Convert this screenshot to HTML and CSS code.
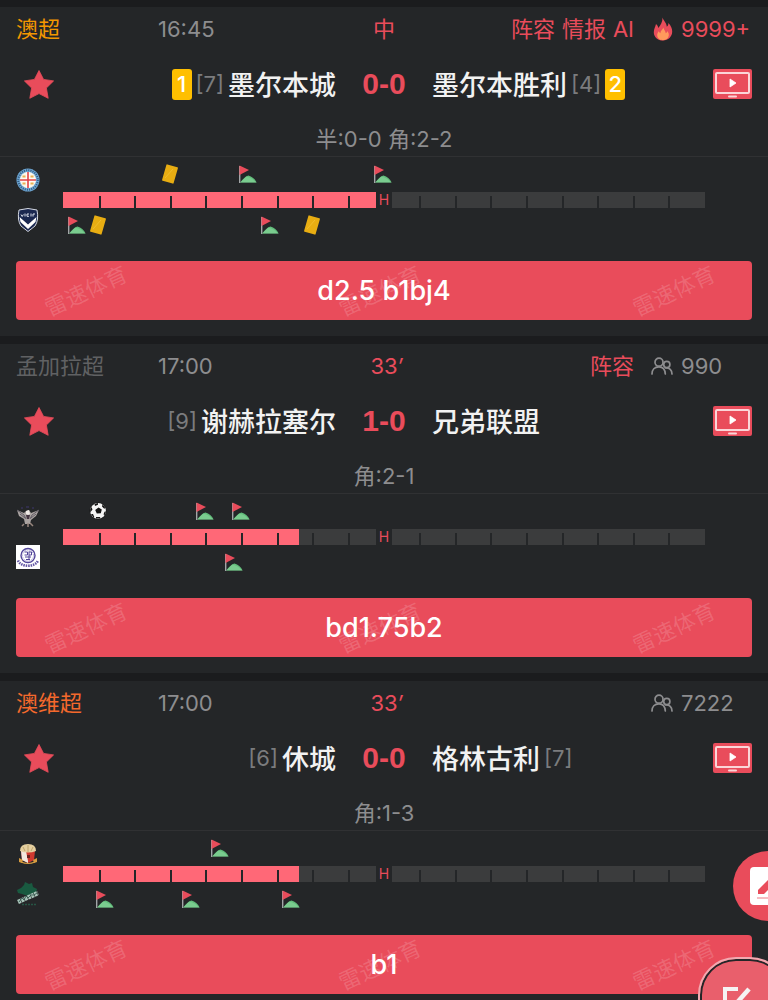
FILE: index.html
```html
<!DOCTYPE html>
<html lang="zh-CN">
<head>
    <meta charset="UTF-8">
    <meta name="viewport" content="width=device-width, initial-scale=1.0">
    <title>雷速体育</title>
    <link rel="stylesheet" href="styles.css">
</head>
<body>

    <!-- 公用图标 -->
    <svg class="sprite" aria-hidden="true">
        <symbol id="star" viewBox="0 0 30 29">
            <path d="M15 0.5 L19.6 9.4 L29.6 10.9 L22.4 18 L24.2 28.3 L15 23.6 L5.8 28.3 L7.6 18 L0.4 10.9 L10.4 9.4 Z" fill="#e94c5b" stroke="#e94c5b" stroke-width="0.8" stroke-linejoin="round"/>
        </symbol>
        <symbol id="tv" viewBox="0 0 39 30">
            <rect width="39" height="30" rx="2" fill="#e94c5b"/>
            <rect x="3" y="4" width="33" height="20" rx="1" fill="none" stroke="#fbd5d8" stroke-width="2"/>
            <path d="M17 10 L23 14 L17 18 Z" fill="#fff" stroke="#fff" stroke-width="0.8" stroke-linejoin="round"/>
            <rect x="15" y="26.500" width="9" height="2" rx="1" fill="#fbd5d8"/>
        </symbol>
        <symbol id="fire" viewBox="0 0 20 24">
            <path d="M9.5 0.5 C10.4 3.6 13.8 6 13.8 9.8 C15 9 15.4 7.6 15.4 6 C18 8.600 19.200 11.600 19.2 14.6 C19.2 19.800 15.200 23.500 10 23.5 C4.800 23.500 0.800 20 0.8 15.2 C0.800 12.200 2.400 9.800 3 7 C4.500 8.200 5 9.400 5.2 11 C7.400 8.400 9.700 5 9.500 0.500 Z" fill="#e94c5b"/>
            <path d="M10.4 10.5 C10.600 12.500 12.600 14 12.8 16.2 C13.800 15.900 14.200 15 14.300 14 C15.600 15.500 16 17 15.8 18.600 C15.400 21.500 13 23.200 10 23.200 C7 23.200 4.400 21.500 4.2 18.500 C4.100 16.800 4.800 15.500 5.600 14.200 C6.100 15 6.500 15.700 7.300 16.200 C7.500 13.800 9.600 12.600 10.400 10.500 Z" fill="#ff9a5c"/>
        </symbol>
        <symbol id="people" viewBox="0 0 22 18">
            <g fill="none" stroke="#8d8d8f" stroke-width="1.700" stroke-linecap="round">
                <circle cx="8" cy="5.200" r="4"/>
                <path d="M1 17 C1 12.800 3.500 9.800 8 9.800 C11.500 9.800 14 11.800 14.300 17"/>
                <circle cx="15.800" cy="7.500" r="3.100"/>
                <path d="M14.500 11 C18.500 10.600 21 13 21 17"/>
            </g>
        </symbol>
        <symbol id="flag" viewBox="0 0 18 18">
            <rect x="0" y="1" width="1.400" height="17" fill="#a3a6a8"/>
            <path d="M0.500 0.500 L10 5 L0.500 10 Z" fill="#e94c5b"/>
            <path d="M1.200 17.500 C4 14 6.500 11 9.500 10.500 C13 11.500 16 14 17.600 17.500 Z" fill="#62bd7b"/>
            <path d="M7 11.800 C11 12 14 14 15.500 16 L17.600 17.500 L1.200 17.500 Z" fill="#8bd69d" opacity="0.600"/>
        </symbol>
        <symbol id="yellow" viewBox="0 0 18 20">
            <rect x="3" y="1.500" width="12" height="17" rx="0.800" transform="rotate(16 9 10)" fill="#e8ad12"/>
            <path d="M4 14 L12 5" stroke="#f1bd2d" stroke-width="1"/>
        </symbol>
        <symbol id="ball" viewBox="0 0 18 18">
            <circle cx="9" cy="9" r="8.400" fill="#151515"/>
            <circle cx="9" cy="9" r="7.900" fill="#f5f5f5"/>
            <path d="M9.500 5.400 L12.800 7.500 L11.800 11.200 L7.800 11.400 L6.200 8 Z M5.500 2 L9 1 L9 2.800 L6 4 Z M13.500 2.500 L16 5 L15.500 7 L13 4.500 Z M16.900 9.500 L16 13 L14.500 12.500 L15.500 9.800 Z M7 15 L11 15 L11.500 16.500 L7 16.500 Z M2 12 L4 12 L5.300 15 L4.500 15.500 Z M1.200 7 L2.500 5 L3.500 7.500 L1.200 10.500 Z" fill="#151515"/>
        </symbol>
    </svg>

    <main class="match-list">

        <article class="match">
            <header class="match-top">
                <div class="meta">
                    <span class="league orange">澳超</span>
                    <time>16:45</time>
                </div>
                <span class="status">中</span>
                <div class="extra">
                    <nav class="tags"><a href="#">阵容</a><a href="#">情报</a><a href="#">AI</a></nav>
                    <span class="viewers hot"><svg class="viewer-icon"><use href="#fire"/></svg>9999+</span>
                </div>
            </header>
            <div class="teams">
                <div class="home">
                    <button class="icon-btn" aria-label="收藏"><svg class="star"><use href="#star"/></svg></button>
                    <span class="side"><b class="card-count">1</b><span class="rank">[7]</span><span class="name">墨尔本城</span></span>
                </div>
                <strong class="score">0-0</strong>
                <div class="away">
                    <span class="side"><span class="name">墨尔本胜利</span><span class="rank">[4]</span><b class="card-count">2</b></span>
                    <button class="icon-btn" aria-label="直播"><svg class="tv"><use href="#tv"/></svg></button>
                </div>
            </div>
            <p class="detail">半:0-0 角:2-2</p>
            <section class="timeline">
                <div class="logos">
                    <svg class="logo" viewBox="0 0 24 24">
                        <circle cx="12" cy="12" r="11.500" fill="#6ea6d2"/>
                        <circle cx="12" cy="12" r="9.800" fill="none" stroke="#31577f" stroke-width="2" stroke-dasharray="1 1.200"/>
                        <circle cx="12" cy="12" r="8" fill="#fbf6ea"/>
                        <path d="M6.500 7.500h3v2h-3z M14.500 7.500h3v2h-3z M6.500 14.500h3v2h-3z M14.500 14.500h3v2h-3z" fill="#e9b154"/>
                        <path d="M12 4 V20 M4 12 H20" stroke="#fff" stroke-width="3.200"/>
                        <path d="M12 4 V20 M4 12 H20" stroke="#df4245" stroke-width="1.600"/>
                    </svg>
                    <svg class="logo" viewBox="0 0 24 24">
                        <path d="M3 2 Q12 -1 21 2 Q23 12 19 18 L12 23.500 L5 18 Q1 12 3 2 Z" fill="#1b2850" stroke="#d5d9e2" stroke-width="1"/>
                        <path d="M3.500 9 L12 16.500 L20.500 9 L19.500 14 L12 21 L4.500 14 Z" fill="#fff"/>
                        <path d="M5 6.500 l1.200 2 l1.200 -2 M9 5.500 v3 M13 6 h-2 v2.300 h2 M15 5.500 v3 M17 8.500 v-2.500 h2" fill="none" stroke="#dfe3ee" stroke-width="1"/>
                    </svg>
                </div>
                <div class="track">
                    <div class="bar">
                        <div class="half"><div class="fill" style="width: 100%"></div></div>
                        <span class="half-mark">H</span>
                        <div class="half"></div>
                        <div class="ticks"><i></i><i></i><i></i><i></i><i></i><i></i><i></i><i></i><i></i><i></i><i></i><i></i><i></i><i></i><i></i><i></i><i></i><i></i></div>
                    </div>
                    <svg class="event up" style="left: 16.600%"><use href="#yellow"/></svg>
                    <svg class="event up" style="left: 28.800%"><use href="#flag"/></svg>
                    <svg class="event up" style="left: 49.900%"><use href="#flag"/></svg>
                    <svg class="event down" style="left: 2.200%"><use href="#flag"/></svg>
                    <svg class="event down" style="left: 5.500%"><use href="#yellow"/></svg>
                    <svg class="event down" style="left: 32.200%"><use href="#flag"/></svg>
                    <svg class="event down" style="left: 38.800%"><use href="#yellow"/></svg>
                </div>
            </section>
            <button class="note">
                <span class="watermark" aria-hidden="true"><span>雷速体育</span><span>雷速体育</span><span>雷速体育</span></span>
                <span class="note-text">d2.5 b1bj4</span>
            </button>
        </article>

        <article class="match">
            <header class="match-top">
                <div class="meta">
                    <span class="league gray">孟加拉超</span>
                    <time>17:00</time>
                </div>
                <span class="status">33<i class="minute">′</i></span>
                <div class="extra">
                    <nav class="tags"><a href="#">阵容</a></nav>
                    <span class="viewers"><svg class="viewer-icon"><use href="#people"/></svg>990</span>
                </div>
            </header>
            <div class="teams">
                <div class="home">
                    <button class="icon-btn" aria-label="收藏"><svg class="star"><use href="#star"/></svg></button>
                    <span class="side"><span class="rank">[9]</span><span class="name">谢赫拉塞尔</span></span>
                </div>
                <strong class="score">1-0</strong>
                <div class="away">
                    <span class="side"><span class="name">兄弟联盟</span></span>
                    <button class="icon-btn" aria-label="直播"><svg class="tv"><use href="#tv"/></svg></button>
                </div>
            </div>
            <p class="detail">角:2-1</p>
            <section class="timeline">
                <div class="logos">
                    <svg class="logo" viewBox="0 0 24 24">
                        <path d="M1 5 L8 8 L10 6 L13 5 L15 8 L23 5 L20 11 L15 15 L14 19 L9 19 L8 14 L3 11 Z" fill="#aaa3a1"/>
                        <path d="M1 5 L8 10 L10 14 M23 5 L16 10 L14 14 M4 9 L9 13 M20 9 L15 13" stroke="#625d66" stroke-width="1" fill="none"/>
                        <path d="M10 6 L13 5 L14 9 L12 10 L10 9 Z" fill="#eee9e5"/>
                        <path d="M10 10 h4 l-1 4 h-2z" fill="#443541"/>
                        <path d="M8 19 l-2 2 M12 18 v4 M14 18 l3 3" stroke="#97857d" stroke-width="1.500"/>
                        <path d="M5 3 h2 M10 2 h3 M16 3 h2" stroke="#3e366e" stroke-width="1"/>
                    </svg>
                    <svg class="logo" viewBox="0 0 24 24">
                        <rect width="24" height="24" fill="#fff"/>
                        <circle cx="12" cy="10.500" r="7" fill="#fff" stroke="#54479a" stroke-width="1.400"/>
                        <circle cx="12" cy="10.500" r="5.500" fill="none" stroke="#9a91c9" stroke-width="1" stroke-dasharray="1 1"/>
                        <path d="M8.500 7 h3 v3 h-3 M13 6.500 v8 M13 7 h2.500 v3 h-2.500 M9 12 h6 M10 14.500 h4" fill="none" stroke="#54479a" stroke-width="1"/>
                        <path d="M2 15.500 C5 22.500 19 22.500 22 15.500" fill="none" stroke="#6255a4" stroke-width="2.600" stroke-dasharray="1.500 0.900"/>
                    </svg>
                </div>
                <div class="track">
                    <div class="bar">
                        <div class="half"><div class="fill" style="width: 75.400%"></div></div>
                        <span class="half-mark">H</span>
                        <div class="half"></div>
                        <div class="ticks"><i></i><i></i><i></i><i></i><i></i><i></i><i></i><i></i><i></i><i></i><i></i><i></i><i></i><i></i><i></i><i></i><i></i><i></i></div>
                    </div>
                    <svg class="event up" style="left: 5.500%"><use href="#ball"/></svg>
                    <svg class="event up" style="left: 22.100%"><use href="#flag"/></svg>
                    <svg class="event up" style="left: 27.700%"><use href="#flag"/></svg>
                    <svg class="event down" style="left: 26.600%"><use href="#flag"/></svg>
                </div>
            </section>
            <button class="note">
                <span class="watermark" aria-hidden="true"><span>雷速体育</span><span>雷速体育</span><span>雷速体育</span></span>
                <span class="note-text">bd1.75b2</span>
            </button>
        </article>

        <article class="match">
            <header class="match-top">
                <div class="meta">
                    <span class="league deep">澳维超</span>
                    <time>17:00</time>
                </div>
                <span class="status">33<i class="minute">′</i></span>
                <div class="extra">
                    <span class="viewers"><svg class="viewer-icon"><use href="#people"/></svg>7222</span>
                </div>
            </header>
            <div class="teams">
                <div class="home">
                    <button class="icon-btn" aria-label="收藏"><svg class="star"><use href="#star"/></svg></button>
                    <span class="side"><span class="rank">[6]</span><span class="name">休城</span></span>
                </div>
                <strong class="score">0-0</strong>
                <div class="away">
                    <span class="side"><span class="name">格林古利</span><span class="rank">[7]</span></span>
                    <button class="icon-btn" aria-label="直播"><svg class="tv"><use href="#tv"/></svg></button>
                </div>
            </div>
            <p class="detail">角:1-3</p>
            <section class="timeline">
                <div class="logos">
                    <svg class="logo" viewBox="0 0 24 24">
                        <path d="M5 9 L19 9 L18 18 L12 21 L6 18 Z" fill="#d0392f"/>
                        <path d="M5 9 L10 9 L12 19 L12 21 L6 18 Z" fill="#f3e9df"/>
                        <path d="M4 9 Q4 2 12 2 Q20 2 20 9 Q12 12 4 9 Z" fill="#e5cf9f"/>
                        <path d="M7 5 L9 9 M12 3 V10 M17 5 L15 9" stroke="#b49a62" stroke-width="0.800"/>
                        <path d="M3 16 l4 2 l-1 3 l-3 -1z M21 16 l-4 2 l1 3 l3 -1z" fill="#d79c40"/>
                        <path d="M5 20 q7 3 14 0" fill="none" stroke="#d79c40" stroke-width="1.200"/>
                        <path d="M11 13 h3 v3 h-3z" fill="#6b2320"/>
                    </svg>
                    <svg class="logo" viewBox="0 0 24 24">
                        <path d="M5 6 L8 3 L9 0 L13 2 L16 1 L17 5 L21 7 L20 11 L15 12 L12 14 L6 12 L2 11 L1 8 Z" fill="#195a40"/>
                        <path d="M2 20 L22 11" stroke="#a8c4b9" stroke-width="4.500" stroke-dasharray="3 0.600"/>
                        <path d="M3 20 L6 16 L8 18 L10 14 L12 16 L15 13 L18 13 L21 11" fill="none" stroke="#365b50" stroke-width="0.900"/>
                        <path d="M6 22.500 H21" stroke="#265544" stroke-width="1.500" stroke-dasharray="2 1"/>
                    </svg>
                </div>
                <div class="track">
                    <div class="bar">
                        <div class="half"><div class="fill" style="width: 75.400%"></div></div>
                        <span class="half-mark">H</span>
                        <div class="half"></div>
                        <div class="ticks"><i></i><i></i><i></i><i></i><i></i><i></i><i></i><i></i><i></i><i></i><i></i><i></i><i></i><i></i><i></i><i></i><i></i><i></i></div>
                    </div>
                    <svg class="event up" style="left: 24.400%"><use href="#flag"/></svg>
                    <svg class="event down" style="left: 6.600%"><use href="#flag"/></svg>
                    <svg class="event down" style="left: 20%"><use href="#flag"/></svg>
                    <svg class="event down" style="left: 35.500%"><use href="#flag"/></svg>
                </div>
            </section>
            <button class="note">
                <span class="watermark" aria-hidden="true"><span>雷速体育</span><span>雷速体育</span><span>雷速体育</span></span>
                <span class="note-text">b1</span>
            </button>
        </article>

    </main>

    <!-- 悬浮按钮 -->
    <button class="float-note" aria-label="笔记">
        <svg viewBox="0 0 38 38">
            <rect width="38" height="38" rx="4" fill="#fff"/>
            <path d="M8 23 L23 8 L28 13 L14 27 L8 27 Z" fill="#e94c5b"/>
            <rect x="7" y="30" width="24" height="2" fill="#f6bcc2"/>
        </svg>
    </button>
    <button class="float-edit" aria-label="编辑">
        <svg viewBox="0 0 32 32">
            <path d="M16 3 H3 V29 H29 V17" fill="none" stroke="#f5f3f4" stroke-width="4"/>
            <path d="M12 20 L27 3" stroke="#f5f3f4" stroke-width="4.500"/>
        </svg>
    </button>

</body>
</html>
```
FILE: styles.css
```css
* {
    box-sizing: border-box;
}

body {
    margin: 0;
    height: 100vh;
    overflow: hidden;
    background: #1b1c1e;
    color: #8d8d8f;
    font-family: Inter, "Noto Sans CJK SC", sans-serif;
    font-size: 22px;
    line-height: 24px;
}

button {
    border: none;
    padding: 0;
    background: none;
    font-family: inherit;
    cursor: pointer;
}

a {
    color: inherit;
    text-decoration: none;
}

.sprite {
    position: absolute;
    width: 0;
    height: 0;
}

.match-list {
    display: flex;
    flex-direction: column;
    gap: 8px;
    padding-top: 7px;
}

.match {
    background: #242628;
    padding-bottom: 16px;
}

/* 顶部信息 */
.match-top {
    display: grid;
    grid-template-columns: 1fr auto 1fr;
    align-items: center;
    height: 44px;
}

.meta {
    display: flex;
    padding-left: 16px;
}

.league {
    width: 142px;
}

.orange {
    color: #f39700;
}

.gray {
    color: #606163;
}

.deep {
    color: #f4692c;
}

.status {
    position: relative;
    color: #e94c5b;
}

/* 分钟符号不参与居中 */
.minute {
    position: absolute;
    left: 100%;
}

.extra {
    display: flex;
    justify-content: flex-end;
}

.tags {
    display: flex;
    gap: 7px;
    margin-right: 17px;
    color: #e94c5b;
}

.viewers {
    display: flex;
    align-items: center;
    gap: 8px;
    width: 117px;
}

.hot {
    color: #e94c5b;
}

.viewer-icon {
    width: 22px;
    height: 18px;
}

.hot .viewer-icon {
    width: 20px;
    height: 24px;
    margin-left: 2px;
}

/* 球队与比分 */
.teams {
    display: grid;
    grid-template-columns: 1fr 96px 1fr;
    align-items: center;
    height: 66px;
}

.home,
.away {
    display: flex;
    justify-content: space-between;
    align-items: center;
}

.home {
    padding-left: 24px;
}

.away {
    padding-right: 16px;
}

.side {
    display: flex;
    align-items: center;
    gap: 4px;
}

.icon-btn svg {
    display: block;
}

.star {
    width: 30px;
    height: 29px;
}

.tv {
    width: 39px;
    height: 30px;
}

.name {
    padding-top: 3px;
    color: #f2f2f2;
    font-size: 27px;
    font-weight: 500;
}

.rank {
    color: #7b7c7e;
}

.card-count {
    width: 20px;
    border-radius: 3px;
    background: #ffbf00;
    color: #fff;
    font-weight: 500;
    line-height: 31px;
    text-align: center;
}

.score {
    color: #e94c5b;
    font-family: "Liberation Sans", sans-serif;
    font-size: 30px;
    text-align: center;
}

.detail {
    margin: 0;
    padding: 10px 0 5px;
    text-align: center;
}

/* 比赛进程 */
.timeline {
    display: flex;
    height: 105px;
    padding: 0 63px 0 16px;
    border-top: 1px solid #303133;
}

.logos {
    display: flex;
    flex-direction: column;
    gap: 16px;
    width: 47px;
    padding-top: 11px;
}

.logo {
    width: 24px;
    height: 24px;
}

.track {
    flex: 1;
    position: relative;
    padding-top: 35px;
}

.bar {
    display: grid;
    grid-template-columns: 1fr 16px 1fr;
    position: relative;
    height: 16px;
}

.half {
    background: #3b3c3d;
}

.fill {
    height: 100%;
    background: #ff6877;
}

.half-mark {
    color: #e94c5b;
    font-size: 14px;
    line-height: 16px;
    text-align: center;
}

.ticks {
    display: grid;
    grid-template-columns: repeat(18, 1fr);
    position: absolute;
    inset: 4px -1px 0 2px;
}

.ticks i {
    border-right: 2px solid #242628;
}

.ticks i:last-child,
.ticks i:nth-child(9) {
    border-right: none;
}

.event {
    position: absolute;
    width: 18px;
    height: 20px;
    transform: translateX(-50%);
}

.up {
    top: 7px;
}

.down {
    top: 58px;
}

/* 备注按钮 */
.note {
    display: block;
    position: relative;
    width: calc(100% - 32px);
    height: 59px;
    margin: 0 16px;
    border-radius: 4px;
    background: #e94c5b;
    color: #fff;
    font-size: 27px;
    font-weight: 500;
}

.watermark {
    display: flex;
    justify-content: space-between;
    align-items: center;
    position: absolute;
    inset: 0;
    padding: 0 34px 0 26px;
    color: rgba(255, 255, 255, 0.16);
    font-size: 22px;
    font-weight: 400;
    line-height: 22px;
}

.watermark span {
    transform: rotate(-25deg);
}

.note-text {
    position: relative;
}

/* 右侧悬浮按钮 */
.float-note,
.float-edit {
    position: fixed;
}

.float-note {
    right: -35px;
    bottom: 79px;
    width: 70px;
    height: 70px;
    border-radius: 50%;
    background: #e94c5b;
}

.float-note svg {
    display: block;
    width: 38px;
    height: 38px;
    margin-left: 17px;
}

.float-edit {
    right: -20px;
    bottom: -47px;
    width: 90px;
    height: 90px;
    padding: 22px;
    border: 2px solid #f2a9b0;
    border-radius: 38px;
    background: #e95f6c;
    box-shadow: inset 0 0 0 2px #242628;
}

.float-edit svg {
    display: block;
    width: 32px;
    height: 32px;
}
```
